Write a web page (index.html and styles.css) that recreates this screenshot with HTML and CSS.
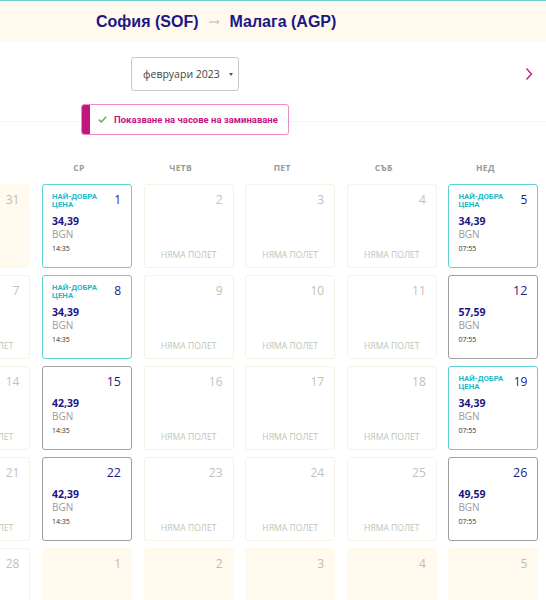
FILE: index.html
```html
<!DOCTYPE html>
<html lang="bg">
<head>
<meta charset="utf-8">
<title>София – Малага</title>
<link rel="stylesheet" href="styles.css">
</head>
<body>
<div class="page">
  <header class="route">
    <h1><span>София (SOF)</span><svg class="arrow" width="11" height="6" viewBox="0 0 11 6"><line x1="0" y1="3" x2="9.5" y2="3" stroke="#b3b3c9" stroke-width="1"/><polyline points="7.8,1.2 10,3 7.8,4.8" fill="none" stroke="#b3b3c9" stroke-width="1"/></svg><span>Малага (AGP)</span></h1>
  </header>

  <div class="toolbar">
    <div class="month">февруари 2023<span class="caret"></span></div>
    <svg class="next" width="8" height="14" viewBox="0 0 8 14"><polyline points="1.5,1.5 6.5,7 1.5,12.5" fill="none" stroke="#c4147f" stroke-width="1.3"/></svg>
  </div>

  <div class="divider">
    <div class="toggle">
      <span class="bar"></span>
      <svg class="check" width="9" height="7" viewBox="0 0 9 7"><polyline points="0.8,3.6 3.3,6 8.2,0.8" fill="none" stroke="#4dbb55" stroke-width="1.5"/></svg>
      <span class="toggle-text">Показване на часове на заминаване</span>
    </div>
  </div>

  <div class="weekdays">
    <span></span><span>СР</span><span>ЧЕТВ</span><span>ПЕТ</span><span>СЪБ</span><span>НЕД</span>
  </div>

  <div class="calendar">
    <div class="day out"><div class="top"><span class="num">31</span></div></div>
    <div class="day flight best"><div class="top"><span class="badge">НАЙ-ДОБРА<br>ЦЕНА</span><span class="num">1</span></div><div class="price">34,39</div><div class="cur">BGN</div><div class="time">14:35</div></div>
    <div class="day none"><div class="top"><span class="num">2</span></div><div class="noflight">НЯМА ПОЛЕТ</div></div>
    <div class="day none"><div class="top"><span class="num">3</span></div><div class="noflight">НЯМА ПОЛЕТ</div></div>
    <div class="day none"><div class="top"><span class="num">4</span></div><div class="noflight">НЯМА ПОЛЕТ</div></div>
    <div class="day flight best"><div class="top"><span class="badge">НАЙ-ДОБРА<br>ЦЕНА</span><span class="num">5</span></div><div class="price">34,39</div><div class="cur">BGN</div><div class="time">07:55</div></div>

    <div class="day none"><div class="top"><span class="num">7</span></div><div class="noflight">НЯМА ПОЛЕТ</div></div>
    <div class="day flight best"><div class="top"><span class="badge">НАЙ-ДОБРА<br>ЦЕНА</span><span class="num">8</span></div><div class="price">34,39</div><div class="cur">BGN</div><div class="time">14:35</div></div>
    <div class="day none"><div class="top"><span class="num">9</span></div><div class="noflight">НЯМА ПОЛЕТ</div></div>
    <div class="day none"><div class="top"><span class="num">10</span></div><div class="noflight">НЯМА ПОЛЕТ</div></div>
    <div class="day none"><div class="top"><span class="num">11</span></div><div class="noflight">НЯМА ПОЛЕТ</div></div>
    <div class="day flight"><div class="top"><span class="num">12</span></div><div class="price">57,59</div><div class="cur">BGN</div><div class="time">07:55</div></div>

    <div class="day none"><div class="top"><span class="num">14</span></div><div class="noflight">НЯМА ПОЛЕТ</div></div>
    <div class="day flight"><div class="top"><span class="num">15</span></div><div class="price">42,39</div><div class="cur">BGN</div><div class="time">14:35</div></div>
    <div class="day none"><div class="top"><span class="num">16</span></div><div class="noflight">НЯМА ПОЛЕТ</div></div>
    <div class="day none"><div class="top"><span class="num">17</span></div><div class="noflight">НЯМА ПОЛЕТ</div></div>
    <div class="day none"><div class="top"><span class="num">18</span></div><div class="noflight">НЯМА ПОЛЕТ</div></div>
    <div class="day flight best"><div class="top"><span class="badge">НАЙ-ДОБРА<br>ЦЕНА</span><span class="num">19</span></div><div class="price">34,39</div><div class="cur">BGN</div><div class="time">07:55</div></div>

    <div class="day none"><div class="top"><span class="num">21</span></div><div class="noflight">НЯМА ПОЛЕТ</div></div>
    <div class="day flight"><div class="top"><span class="num">22</span></div><div class="price">42,39</div><div class="cur">BGN</div><div class="time">14:35</div></div>
    <div class="day none"><div class="top"><span class="num">23</span></div><div class="noflight">НЯМА ПОЛЕТ</div></div>
    <div class="day none"><div class="top"><span class="num">24</span></div><div class="noflight">НЯМА ПОЛЕТ</div></div>
    <div class="day none"><div class="top"><span class="num">25</span></div><div class="noflight">НЯМА ПОЛЕТ</div></div>
    <div class="day flight"><div class="top"><span class="num">26</span></div><div class="price">49,59</div><div class="cur">BGN</div><div class="time">07:55</div></div>

    <div class="day none"><div class="top"><span class="num">28</span></div><div class="noflight">НЯМА ПОЛЕТ</div></div>
    <div class="day out"><div class="top"><span class="num">1</span></div></div>
    <div class="day out"><div class="top"><span class="num">2</span></div></div>
    <div class="day out"><div class="top"><span class="num">3</span></div></div>
    <div class="day out"><div class="top"><span class="num">4</span></div></div>
    <div class="day out"><div class="top"><span class="num">5</span></div></div>
  </div>
</div>
</body>
</html>
```

FILE: styles.css
```css
* { box-sizing: border-box; }
html, body { margin: 0; padding: 0; height: 600px; overflow: hidden; background: #fff; }
body { font-family: "Open Sans", "Noto Sans", sans-serif; color: #333; }

.page { width: 546px; }

.route {
  height: 42px;
  background: #fff9ee;
  border-top: 1px solid #6ccfcc;
  display: flex;
  align-items: center;
  padding-left: 96px;
}
.route h1 {
  margin: 0;
  font-family: "Liberation Sans", Arial, sans-serif;
  font-size: 16px;
  font-weight: bold;
  color: #1b1685;
  display: flex;
  align-items: center;
  gap: 10px;
}
.route .arrow { margin-top: 1px; }

.toolbar {
  display: flex;
  justify-content: space-between;
  align-items: flex-start;
  padding: 15px 13px 0 131px;
  height: 79px;
}
.month {
  width: 108px;
  height: 34px;
  border: 1px solid #c9c9c9;
  border-radius: 3px;
  display: flex;
  align-items: center;
  padding-left: 11px;
  font-size: 10.5px;
  color: #444;
}
.caret {
  margin-left: 9px;
  width: 0;
  height: 0;
  border-left: 2.5px solid transparent;
  border-right: 2.5px solid transparent;
  border-top: 3px solid #555;
}
.next { margin-top: 10px; }

.divider {
  border-top: 1px solid #fbf6e6;
  padding-left: 81px;
  height: 41px;
}
.toggle {
  margin-top: -18px;
  width: 208px;
  height: 31px;
  border: 1px solid #e98bc6;
  border-radius: 3px;
  display: flex;
  align-items: center;
  background: #fff;
  overflow: hidden;
}
.toggle .bar {
  align-self: stretch;
  width: 8px;
  background: #c4147f;
}
.toggle .check { margin-left: 8px; }
.toggle-text {
  margin-left: 7px;
  font-family: "Roboto", sans-serif;
  font-weight: bold;
  font-size: 9.5px;
  color: #c4147f;
}

.weekdays {
  display: grid;
  grid-template-columns: repeat(6, 90px);
  column-gap: 11.6px;
  margin-left: -59.6px;
  height: 18px;
}
.weekdays span {
  text-align: center;
  padding-right: 16px;
  font-size: 8.5px;
  line-height: 11px;
  font-weight: bold;
  color: #9a9a9a;
  letter-spacing: 0.3px;
}

.calendar {
  display: grid;
  grid-template-columns: repeat(6, 90px);
  grid-auto-rows: 84px;
  column-gap: 11.6px;
  row-gap: 7px;
  margin-left: -59.6px;
  margin-top: 4px;
}
.day {
  border: 1px solid #f5f2e6;
  border-radius: 3px;
  padding: 8px 10px 0 9px;
  display: flex;
  flex-direction: column;
}
.day .top {
  display: flex;
  justify-content: flex-end;
  align-items: flex-start;
  height: 16px;
}
.num {
  font-size: 12px;
  line-height: 14px;
  color: #bfc2bb;
}
.badge {
  margin-right: auto;
  font-family: "Roboto", sans-serif;
  font-weight: bold;
  font-size: 7.8px;
  line-height: 8px;
  color: #22b8c9;
}
.flight { border: 1px solid #9e9e9e; }
.flight.best { border: 1.5px solid #5fd0d4; }
.flight .num { color: #1e1a8e; font-size: 12.5px; }
.flight.best .num { font-size: 12px; }
.price {
  margin-top: 6px;
  font-size: 10.5px;
  line-height: 13px;
  font-weight: bold;
  color: #1b1685;
}
.cur {
  font-size: 10px;
  line-height: 12px;
  color: #9b9b9b;
}
.time {
  margin-top: 4px;
  font-size: 7px;
  line-height: 10px;
  color: #333;
}
.noflight {
  margin-top: auto;
  margin-bottom: 6px;
  text-align: center;
  font-size: 8.6px;
  color: #bcc6b8;
  padding-left: 1px;
}
.out {
  background: #fff9ee;
  border-color: #fff9ee;
}
.out .num { color: #b9c0b5; }
```
